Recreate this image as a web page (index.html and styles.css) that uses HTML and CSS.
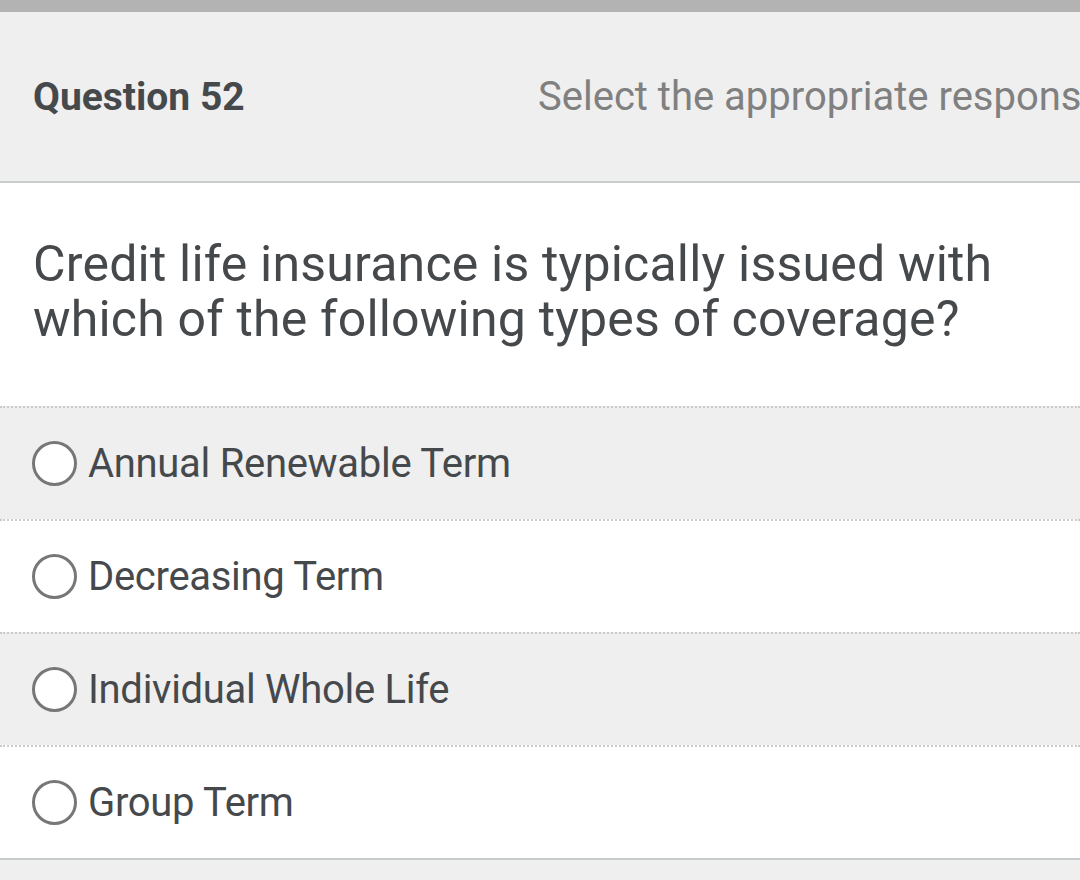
FILE: index.html
```html
<!DOCTYPE html>
<html lang="en">
<head>
  <meta charset="UTF-8" />
  <meta name="viewport" content="width=device-width, initial-scale=1.0"/>
  <title>Question 52</title>
  <link rel="stylesheet" href="styles.css">
</head>
<body>
  <div class="topbar"></div>
  <header class="q-head">
    <h3>Question 52</h3>
    <span class="hint">Select the appropriate response</span>
  </header>
  <main>
    <p class="q-text">Credit life insurance is typically issued with which of the following types of coverage?</p>
    <div class="options">
      <label class="option shade"><span class="radio"></span>Annual Renewable Term</label>
      <label class="option"><span class="radio"></span>Decreasing Term</label>
      <label class="option shade"><span class="radio"></span>Individual Whole Life</label>
      <label class="option last"><span class="radio"></span>Group Term</label>
    </div>
  </main>
</body>
</html>
```

FILE: styles.css
```css
* {
  box-sizing: border-box;
}
body {
  margin: 0;
  font-family: Roboto, "Liberation Sans", sans-serif;
  background: #efefef;
  color: #46494c;
  height: 880px;
  overflow: hidden;
}
.topbar {
  height: 12px;
  background: #b3b3b3;
}
.q-head {
  height: 171px;
  display: flex;
  align-items: center;
  padding: 0 0 0 33px;
  border-bottom: 2px solid #c8cbcb;
  white-space: nowrap;
  overflow: hidden;
}
.q-head h3 {
  margin: 0;
  font-size: 39px;
  font-weight: 700;
  width: 505px;
  flex-shrink: 0;
}
.hint {
  font-size: 40px;
  color: #808080;
}
main {
  background: #fff;
}
.q-text {
  margin: 0;
  padding: 54px 40px 59px 33px;
  font-size: 50px;
  line-height: 55px;
  letter-spacing: 0.2px;
}
.option {
  display: flex;
  align-items: center;
  height: 113px;
  padding: 0 0 0 32px;
  font-size: 40px;
  letter-spacing: -0.3px;
  background: #fff;
  border-top: 2px dotted #cbcbcb;
}
.option.shade {
  background: #efefef;
}
.option.last {
  height: 115px;
  border-bottom: 2px solid #c8cbcb;
}
.radio {
  width: 45px;
  height: 45px;
  border: 3px solid #777;
  border-radius: 50%;
  background: #fff;
  margin-right: 11px;
  flex-shrink: 0;
}
```
